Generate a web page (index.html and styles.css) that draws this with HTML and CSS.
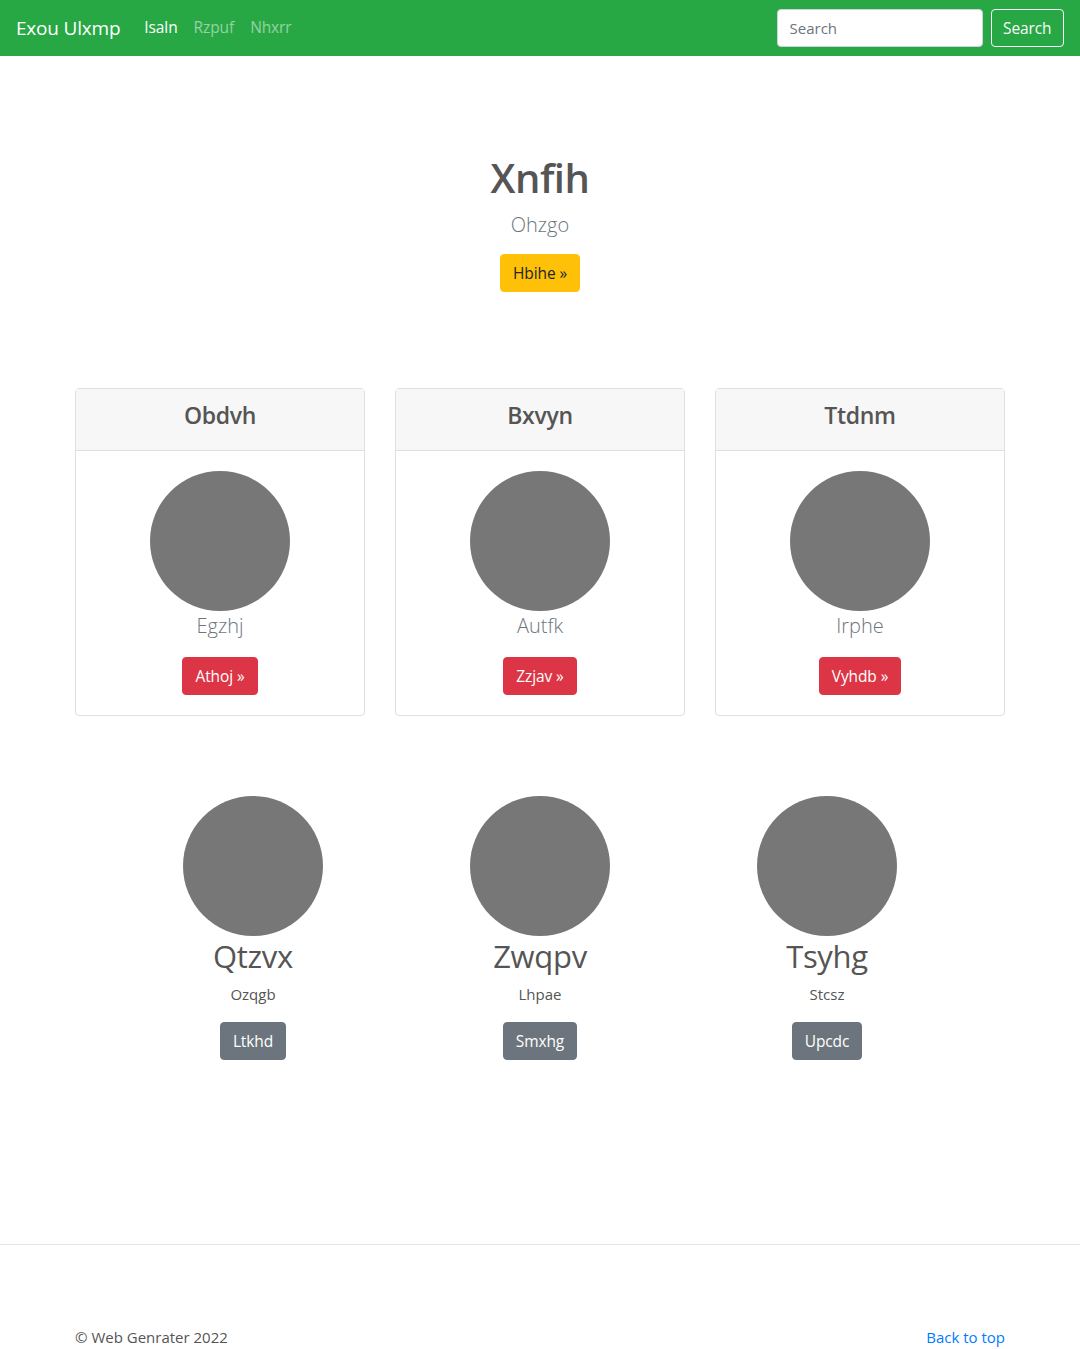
FILE: index.html
```html
<!DOCTYPE html>
<html lang="en">
<head>
<meta charset="utf-8">
<title>Exou Ulxmp</title>
<link rel="stylesheet" href="styles.css">
</head>
<body>
<nav class="navbar">
  <a class="brand" href="#">Exou Ulxmp</a>
  <ul class="nav-links">
    <li><a class="nav-link active" href="#">Isaln</a></li>
    <li><a class="nav-link" href="#">Rzpuf</a></li>
    <li><a class="nav-link" href="#">Nhxrr</a></li>
  </ul>
  <form class="search-form">
    <input class="search-input" type="text" placeholder="Search">
    <button class="btn btn-outline-light" type="button">Search</button>
  </form>
</nav>

<main>
  <section class="hero">
    <h1 class="hero-title">Xnfih</h1>
    <p class="lead hero-lead">Ohzgo</p>
    <a class="btn btn-warning" href="#">Hbihe »</a>
  </section>

  <section class="container cards">
    <div class="card">
      <div class="card-header"><h3 class="card-title">Obdvh</h3></div>
      <div class="card-body">
        <div class="circle"></div>
        <p class="lead card-lead">Egzhj</p>
        <a class="btn btn-danger" href="#">Athoj »</a>
      </div>
    </div>
    <div class="card">
      <div class="card-header"><h3 class="card-title">Bxvyn</h3></div>
      <div class="card-body">
        <div class="circle"></div>
        <p class="lead card-lead">Autfk</p>
        <a class="btn btn-danger" href="#">Zzjav »</a>
      </div>
    </div>
    <div class="card">
      <div class="card-header"><h3 class="card-title">Ttdnm</h3></div>
      <div class="card-body">
        <div class="circle"></div>
        <p class="lead card-lead">Irphe</p>
        <a class="btn btn-danger" href="#">Vyhdb »</a>
      </div>
    </div>
  </section>

  <section class="people">
    <div class="person">
      <div class="circle"></div>
      <h2 class="person-name">Qtzvx</h2>
      <p class="person-text">Ozqgb</p>
      <a class="btn btn-secondary" href="#">Ltkhd</a>
    </div>
    <div class="person">
      <div class="circle"></div>
      <h2 class="person-name">Zwqpv</h2>
      <p class="person-text">Lhpae</p>
      <a class="btn btn-secondary" href="#">Smxhg</a>
    </div>
    <div class="person">
      <div class="circle"></div>
      <h2 class="person-name">Tsyhg</h2>
      <p class="person-text">Stcsz</p>
      <a class="btn btn-secondary" href="#">Upcdc</a>
    </div>
  </section>
</main>

<footer class="footer">
  <div class="container footer-inner">
    <p class="copy">© Web Genrater 2022</p>
    <a class="back-top" href="#">Back to top</a>
  </div>
</footer>
</body>
</html>
```

FILE: styles.css
```css
* { box-sizing: border-box; }

html, body {
  margin: 0;
  padding: 0;
}

body {
  font-family: "Open Sans", "Noto Sans", sans-serif;
  font-size: 16px;
  line-height: 1.5;
  color: #555;
  background: #fff;
}

a { text-decoration: none; }

h1, h2, h3, p { margin: 0; }

.navbar {
  display: flex;
  align-items: center;
  height: 56px;
  padding: 8px 16px;
  background: #28a745;
}

.brand {
  font-size: 19px;
  line-height: 30px;
  padding: 5px 0;
  margin-right: 16px;
  color: #fff;
  letter-spacing: -0.2px;
}

.nav-links {
  display: flex;
  list-style: none;
  margin: 0;
  padding: 0;
  flex: 1;
}

.nav-link {
  display: block;
  padding: 8px 8px;
  font-size: 15.5px;
  color: rgba(255, 255, 255, 0.5);
  letter-spacing: -0.1px;
}

.nav-link.active { color: #fff; }

.search-form {
  display: flex;
  align-items: center;
}

.search-input {
  width: 206px;
  height: 38px;
  padding: 6px 12px;
  font-family: inherit;
  font-size: 15px;
  color: #495057;
  border: 1px solid #ced4da;
  border-radius: 4px;
  background: #fff;
  margin-right: 8px;
}

.search-input::placeholder { color: #6c757d; }

.btn {
  display: inline-block;
  height: 38px;
  padding: 0 12px;
  font-family: inherit;
  font-size: 15.5px;
  line-height: 36px;
  border: 1px solid transparent;
  border-radius: 4px;
  letter-spacing: -0.1px;
  cursor: pointer;
}

.btn-outline-light {
  background: transparent;
  color: #f8f9fa;
  border-color: #f8f9fa;
  padding: 0 11.5px;
}

.btn-warning { background: #ffc107; border-color: #ffc107; color: #212529; }
.btn-danger { background: #dc3545; border-color: #dc3545; color: #fff; }
.btn-secondary { background: #6c757d; border-color: #6c757d; color: #fff; }

.hero {
  text-align: center;
  padding: 98px 0 96px;
}

.hero-title {
  font-size: 40px;
  font-weight: 600;
  line-height: 48px;
  margin-bottom: 8px;
  letter-spacing: -0.5px;
}

.lead {
  font-size: 20px;
  font-weight: 300;
  line-height: 30px;
  color: #6c757d;
}

.hero-lead { margin-bottom: 14px; }

.container {
  width: 930px;
  margin: 0 auto;
}

.cards {
  display: grid;
  grid-template-columns: repeat(3, 290px);
  column-gap: 30px;
}

.card {
  border: 1px solid #dfdfdf;
  border-radius: 4px;
  background: #fff;
}

.card-header {
  background: #f7f7f7;
  border-bottom: 1px solid #dfdfdf;
  padding: 12px 20px;
  height: 62px;
  text-align: center;
}

.card-title {
  font-size: 23px;
  font-weight: 600;
  line-height: 29px;
  letter-spacing: -0.3px;
}

.card-body {
  padding: 20px 20px 20px;
  display: flex;
  flex-direction: column;
  align-items: center;
}

.circle {
  width: 140px;
  height: 140px;
  border-radius: 50%;
  background: #777;
}

.card-lead { margin-bottom: 16px; color: #6c757d; }

.people {
  width: 861px;
  margin: 80px auto 0;
  display: grid;
  grid-template-columns: repeat(3, 1fr);
  padding-bottom: 184px;
}

.person {
  display: flex;
  flex-direction: column;
  align-items: center;
}

.person-name {
  font-size: 31px;
  font-weight: 400;
  line-height: 40px;
  margin-bottom: 6px;
  letter-spacing: -0.3px;
}

.person-text {
  font-size: 15px;
  line-height: 24px;
  margin-bottom: 16px;
}

.footer {
  border-top: 1px solid #e5e5e5;
  padding: 80px 0 48px;
}

.footer-inner {
  display: flex;
  justify-content: space-between;
  align-items: center;
}

.copy {
  font-size: 15px;
  line-height: 24px;
  color: #555;
}

.back-top {
  font-size: 15px;
  line-height: 24px;
  color: #007bff;
}
```
